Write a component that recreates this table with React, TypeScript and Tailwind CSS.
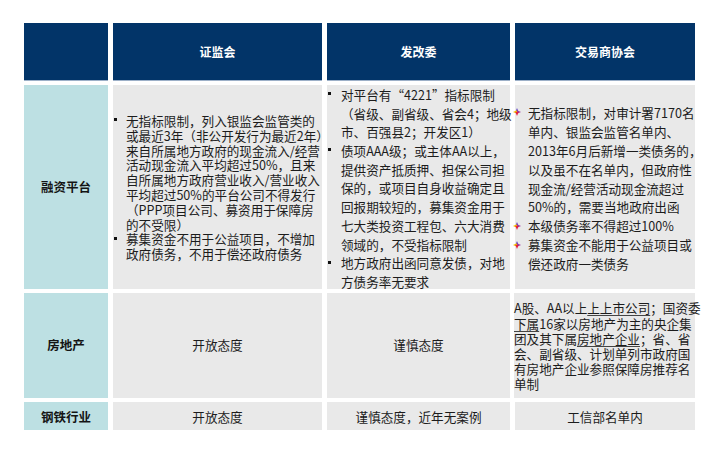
import React from "react";

function Dot({ h, w }: { h: string; w: string }) {
  return (
    <span className={`${w} ${h} flex items-center shrink-0`}>
      <span className="block w-[3px] h-[3px] bg-[#111] -mt-[3px]" />
    </span>
  );
}

function Star() {
  return (
    <span className="w-[15px] h-[18.9px] -ml-[2px] flex items-center shrink-0">
      <svg width="8" height="8" viewBox="0 0 8 8" className="-mt-[2px]">
        <polygon points="4,0 5.6,4 2.4,4" fill="#5a3cc4" />
        <polygon points="0,4 4,2.2 4,5.8" fill="#f4b400" />
        <polygon points="8,4 4,2.2 4,5.8" fill="#9a3aa6" />
        <polygon points="4,8 5.6,4 2.4,4" fill="#e6203c" />
      </svg>
    </span>
  );
}

function Lines({ lines, lh }: { lines: React.ReactNode[]; lh: string }) {
  return (
    <div className="flex flex-col">
      {lines.map((l, i) => (
        <div key={i} className={`${lh} whitespace-nowrap`}>
          {l}
        </div>
      ))}
    </div>
  );
}

export default function App() {
  const head =
    "bg-[#023468] border-b border-[#9db0c8] flex items-center justify-center text-white font-bold text-[12px]";
  const label =
    "bg-[#bde0e3] flex items-center justify-center font-bold text-[12.5px] text-[#141414]";
  const cell = "bg-[#e9e9e9] text-[12.6px] text-[#1c1c1c]";
  const h2 = "h-[14.8px] leading-[14.8px]";
  const h3 = "h-[18.7px] leading-[18.7px]";
  const h4 = "h-[18.9px] leading-[18.9px]";
  const h5 = "h-[15.2px] leading-[15.2px]";
  const ul = "underline decoration-[0.5px] decoration-[#444] underline-offset-2";
  return (
    <div className="w-[720px] h-[449px] bg-white pt-[23px] pl-[24px] font-['Noto_Sans_CJK_SC',sans-serif]">
      <div className="grid grid-cols-[84px_209px_183px_180px] grid-rows-[58px_204px_105px_28px] gap-x-[5px] gap-y-[4px]">
        <div className={head}></div>
        <div className={head}>证监会</div>
        <div className={head}>发改委</div>
        <div className={head}>交易商协会</div>

        <div className={label}>融资平台</div>
        <div className={`${cell} pt-[29px] pl-[1px] flex flex-col`}>
          <div className="flex">
            <Dot h="h-[14.8px]" w="w-[12px]" />
            <Lines
              lh={h2}
              lines={[
                "无指标限制，列入银监会监管类的",
                "或最近3年（非公开发行为最近2年）",
                "来自所属地方政府的现金流入/经营",
                "活动现金流入平均超过50%，且来",
                "自所属地方政府营业收入/营业收入",
                "平均超过50%的平台公司不得发行",
                "（PPP项目公司、募资用于保障房",
                "的不受限）",
              ]}
            />
          </div>
          <div className="flex">
            <Dot h="h-[14.8px]" w="w-[12px]" />
            <Lines
              lh={h2}
              lines={["募集资金不用于公益项目，不增加", "政府债务，不用于偿还政府债务"]}
            />
          </div>
        </div>
        <div className={`${cell} pt-[1px] pl-[1px] flex flex-col`}>
          <div className="flex">
            <Dot h="h-[18.7px]" w="w-[13px]" />
            <Lines
              lh={h3}
              lines={[
                "对平台有“4221”指标限制",
                "（省级、副省级、省会4；地级",
                "市、百强县2；开发区1）",
              ]}
            />
          </div>
          <div className="flex">
            <Dot h="h-[18.7px]" w="w-[13px]" />
            <Lines
              lh={h3}
              lines={[
                "债项AAA级；或主体AA以上，",
                "提供资产抵质押、担保公司担",
                "保的，或项目自身收益确定且",
                "回报期较短的，募集资金用于",
                "七大类投资工程包、六大消费",
                "领域的，不受指标限制",
              ]}
            />
          </div>
          <div className="flex">
            <Dot h="h-[18.7px]" w="w-[13px]" />
            <Lines lh={h3} lines={["地方政府出函同意发债，对地", "方债务率无要求"]} />
          </div>
        </div>
        <div className={`${cell} pt-[19px] flex flex-col`}>
          <div className="flex">
            <Star />
            <Lines
              lh={h4}
              lines={[
                "无指标限制，对审计署7170名",
                "单内、银监会监管名单内、",
                "2013年6月后新增一类债务的，",
                "以及虽不在名单内，但政府性",
                "现金流/经营活动现金流超过",
                "50%的，需要当地政府出函",
              ]}
            />
          </div>
          <div className="flex">
            <Star />
            <Lines lh={h4} lines={["本级债务率不得超过100%"]} />
          </div>
          <div className="flex">
            <Star />
            <Lines lh={h4} lines={["募集资金不能用于公益项目或", "偿还政府一类债务"]} />
          </div>
        </div>

        <div className={label}>房地产</div>
        <div className={`${cell} flex items-center justify-center`}>开放态度</div>
        <div className={`${cell} flex items-center justify-center`}>谨慎态度</div>
        <div className={`${cell} flex items-center -ml-[1px] pt-[1px]`}>
          <Lines
            lh={h5}
            lines={[
              <>
                A股、AA以上<span className={ul}>上上市公司</span>；国资委
              </>,
              <>
                <span className={ul}>下属</span>16家以房地产为主的央企集
              </>,
              <>
                团及其下属<span className={ul}>房地产企业</span>；省、省
              </>,
              "会、副省级、计划单列市政府国",
              "有房地产企业参照保障房推荐名",
              "单制",
            ]}
          />
        </div>

        <div className={`${label} pt-[3px]`}>钢铁行业</div>
        <div className={`${cell} flex items-center justify-center pt-[3px]`}>开放态度</div>
        <div className={`${cell} flex items-center justify-center pt-[3px] whitespace-nowrap`}>
          谨慎态度，近年无案例
        </div>
        <div className={`${cell} flex items-center justify-center pt-[3px]`}>工信部名单内</div>
      </div>
    </div>
  );
}
